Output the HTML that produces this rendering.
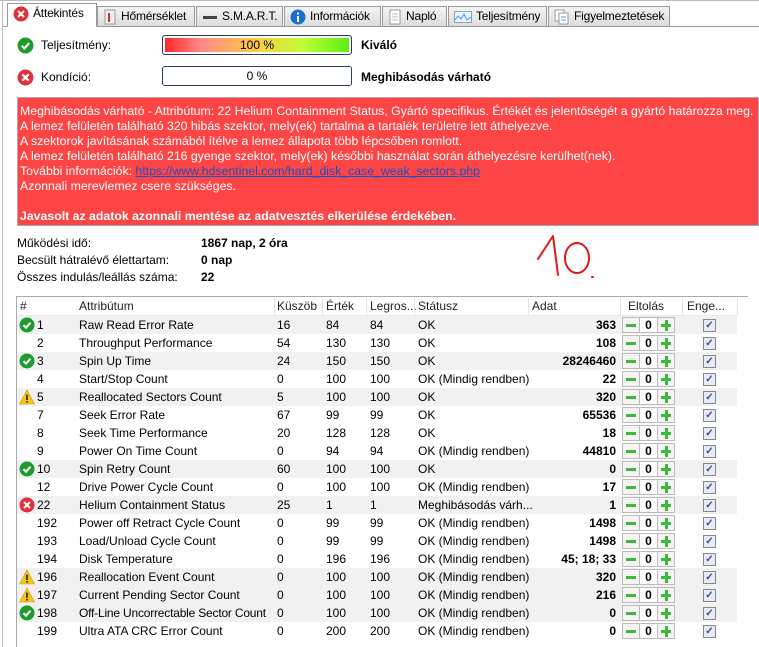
<!DOCTYPE html>
<html><head><meta charset="utf-8"><style>
*{margin:0;padding:0;box-sizing:border-box}
body{width:759px;height:647px;background:#fff;font-family:"Liberation Sans",Arial,sans-serif;font-size:12px;color:#000;position:relative;overflow:hidden}
.a{position:absolute;white-space:nowrap}
.tab{position:absolute;top:6px;height:20px;background:linear-gradient(#f4f4f4,#dcdcdc);border:1px solid #999;border-bottom:none;padding:2px 0 0 5px;font-size:12px;white-space:nowrap;overflow:hidden;letter-spacing:-0.2px}
.tab.act{top:3px;height:24px;background:#fff;border-color:#999}
.ic{display:inline-block;vertical-align:middle;margin-right:4px}
.bar{position:absolute;left:162px;width:190px;height:20px;border:1px solid #2a3a5a;border-radius:3px;text-align:center;line-height:18px}
.red{position:absolute;left:17px;top:97px;width:742px;height:129px;background:#fe4545;border:1px solid #aaa;color:#fff;font-size:12.3px;line-height:15px;padding:6px 0 0 2px}
.red div{white-space:nowrap}
.tbl{position:absolute;left:16px;top:296px;width:732px;height:351px;border-left:1px solid #aaa;border-top:1px solid #aaa}
.row{position:absolute;left:0;width:720px;height:18px;line-height:18px}
.sh{background:#f1f1f1}
.row span{position:absolute;top:0}
.c0{left:20px}.c1{left:62px}.c2{left:260px}.c3{left:309px}.c4{left:353px}.c5{left:401px}
.c6{right:121px;font-weight:bold;text-align:right}
.btn{position:absolute;top:1px;width:18px;height:16px;border:1px solid #bbb;background:#f4f4f4}
.mn{left:605px}.mn:after{content:"";position:absolute;left:3px;top:6px;width:10px;height:3px;background:#3cb83c}
.zb{left:622px;width:19px;background:#fff;text-align:center;font-weight:bold;line-height:14px}
.pl{left:640px}.pl:before{content:"";position:absolute;left:3px;top:6px;width:10px;height:3px;background:#3cb83c}.pl:after{content:"";position:absolute;left:7px;top:2px;width:3px;height:11px;background:#3cb83c}
.cb{position:absolute;left:686px;top:3px;width:13px;height:13px;border:1px solid #888;background:#e8eaf4;color:#334a9a;font-size:10px;line-height:11px;text-align:center;font-weight:bold}
.hd{position:absolute;top:1px;height:17px;line-height:17px;color:#222}
.sep{position:absolute;top:1px;width:1px;height:17px;background:#e4e4e4}
</style></head><body>
<div class="a" style="left:0;top:0;width:759px;height:1px;background:#bbb"></div>
<div class="a" style="left:2px;top:0;width:1px;height:647px;background:#bbb"></div>
<div class="a" style="left:3px;top:26px;width:756px;height:1px;background:#999"></div>

<div class="tab act" style="left:7px;width:90px;border-bottom:1px solid #fff"><svg class="ic" width="16" height="16" viewBox="0 0 16 16"><circle cx="8" cy="8" r="7.5" fill="#e0303a"/><path d="M5 5l6 6M11 5l-6 6" stroke="#fff" stroke-width="2"/></svg>Áttekintés</div>
<div class="tab" style="left:97px;width:98px"><svg class="ic" width="14" height="16" viewBox="0 0 14 16"><rect x="2" y="1" width="10" height="14" fill="#eee" stroke="#999"/><rect x="5" y="4" width="2" height="9" fill="#c33"/></svg>Hőmérséklet</div>
<div class="tab" style="left:196px;width:87px"><svg class="ic" width="16" height="16"><rect x="1" y="7" width="14" height="3" fill="#444"/></svg>S.M.A.R.T.</div>
<div class="tab" style="left:284px;width:97px"><svg class="ic" width="16" height="16" viewBox="0 0 16 16"><circle cx="8" cy="8" r="7.5" fill="#1a70d0"/><rect x="7" y="7" width="2" height="6" fill="#fff"/><rect x="7" y="3.5" width="2" height="2" fill="#fff"/></svg>Információk</div>
<div class="tab" style="left:382px;width:65px"><svg class="ic" width="14" height="16"><rect x="2" y="1" width="10" height="14" fill="#fff" stroke="#999"/><path d="M4 5h6M4 8h6M4 11h6" stroke="#bbb"/></svg>Napló</div>
<div class="tab" style="left:448px;width:99px"><svg class="ic" width="18" height="14"><rect x="0.5" y="1.5" width="17" height="11" fill="#eef4ff" stroke="#8aa"/><path d="M1 10l3-4 3 3 3-5 3 6 4-3" stroke="#39f" fill="none"/></svg>Teljesítmény</div>
<div class="tab" style="left:548px;width:122px"><svg class="ic" width="16" height="16"><rect x="1" y="1" width="9" height="11" fill="#fff" stroke="#999"/><rect x="5" y="4" width="9" height="11" fill="#fff" stroke="#999"/><path d="M7 8h5M7 11h5" stroke="#69c"/></svg>Figyelmeztetések</div>

<svg class="a" style="left:17px;top:37px" width="17" height="17" viewBox="0 0 16 16"><circle cx="8" cy="8" r="7.5" fill="#1e9a2e"/><path d="M4.5 8.2l2.5 2.5 4.5-5" stroke="#fff" stroke-width="2" fill="none"/></svg>
<div class="a" style="left:41px;top:38px">Teljesítmény:</div>
<div class="bar" style="top:35px;background:linear-gradient(90deg,#f22 0%,#f88 20%,#fc4 50%,#bf3 75%,#5e1 100%);box-shadow:inset 0 0 0 2px #fff">100 %</div>
<div class="a" style="left:361px;top:38px;font-weight:bold">Kiváló</div>
<svg class="a" style="left:17px;top:69px" width="17" height="17" viewBox="0 0 16 16"><circle cx="8" cy="8" r="7.5" fill="#e0303a"/><path d="M5 5l6 6M11 5l-6 6" stroke="#fff" stroke-width="2"/></svg>
<div class="a" style="left:41px;top:70px">Kondíció:</div>
<div class="bar" style="top:66px;background:#fff">0 %</div>
<div class="a" style="left:361px;top:70px;font-weight:bold">Meghibásodás várható</div>

<div class="red">
<div>Meghibásodás várható - Attribútum: 22 Helium Containment Status, Gyártó specifikus. Értékét és jelentőségét a gyártó határozza meg.</div>
<div>A lemez felületén található 320 hibás szektor, mely(ek) tartalma a tartalék területre lett áthelyezve.</div>
<div>A szektorok javításának számából ítélve a lemez állapota több lépcsőben romlott.</div>
<div>A lemez felületén található 216 gyenge szektor, mely(ek) későbbi használat során áthelyezésre kerülhet(nek).</div>
<div>További információk: <span style="color:#1a50c8;text-decoration:underline">https://www.hdsentinel.com/hard_disk_case_weak_sectors.php</span></div>
<div>Azonnali merevlemez csere szükséges.</div>
<div>&nbsp;</div>
<div style="font-weight:bold">Javasolt az adatok azonnali mentése az adatvesztés elkerülése érdekében.</div>
</div>

<div class="a" style="left:17px;top:236px">Működési idő:</div><div class="a" style="left:201px;top:236px;font-weight:bold">1867 nap, 2 óra</div>
<div class="a" style="left:17px;top:253px">Becsült hátralévő élettartam:</div><div class="a" style="left:201px;top:253px;font-weight:bold">0 nap</div>
<div class="a" style="left:17px;top:270px">Összes indulás/leállás száma:</div><div class="a" style="left:201px;top:270px;font-weight:bold">22</div>
<svg class="a" style="left:530px;top:230px" width="70" height="50"><path d="M8 29 L23 6 L28 45" stroke="#e01818" stroke-width="2" fill="none" stroke-linecap="round" stroke-linejoin="round"/><ellipse cx="47" cy="28" rx="12" ry="15" stroke="#e01818" stroke-width="2" fill="none"/><path d="M62 47 l1 0" stroke="#e01818" stroke-width="2" stroke-linecap="round"/></svg>

<div class="tbl">
<div class="hd" style="left:3px">#</div>
<div class="hd" style="left:62px">Attribútum</div><div class="sep" style="left:257px"></div>
<div class="hd" style="left:260px">Küszöb</div><div class="sep" style="left:305px"></div>
<div class="hd" style="left:309px">Érték</div><div class="sep" style="left:349px"></div>
<div class="hd" style="left:353px">Legros...</div><div class="sep" style="left:397px"></div>
<div class="hd" style="left:401px">Státusz</div><div class="sep" style="left:511px"></div>
<div class="hd" style="left:515px">Adat</div><div class="sep" style="left:603px"></div>
<div class="hd" style="left:611px">Eltolás</div><div class="sep" style="left:665px"></div>
<div class="hd" style="left:670px">Enge...</div><div class="sep" style="left:720px"></div>
<div class="a" style="left:0;top:18px;width:720px;height:1px;background:#e8e8e8"></div>
</div>

<div id="rows" class="a" style="left:17px;top:316px;width:720px;height:331px">
<div class="row sh" style="top:0"><svg class="a" style="left:2px;top:1px" width="16" height="16" viewBox="0 0 16 16"><circle cx="8" cy="8" r="7.5" fill="#1e9a2e"/><path d="M4.5 8.2l2.5 2.5 4.5-5" stroke="#fff" stroke-width="2" fill="none"/></svg><span class="c0">1</span><span class="c1">Raw Read Error Rate</span><span class="c2">16</span><span class="c3">84</span><span class="c4">84</span><span class="c5">OK</span><span class="c6">363</span><div class="btn mn"></div><div class="btn zb">0</div><div class="btn pl"></div><div class="cb">✓</div></div>
<div class="row" style="top:18px"><span class="c0">2</span><span class="c1">Throughput Performance</span><span class="c2">54</span><span class="c3">130</span><span class="c4">130</span><span class="c5">OK</span><span class="c6">108</span><div class="btn mn"></div><div class="btn zb">0</div><div class="btn pl"></div><div class="cb">✓</div></div>
<div class="row sh" style="top:36px"><svg class="a" style="left:2px;top:1px" width="16" height="16" viewBox="0 0 16 16"><circle cx="8" cy="8" r="7.5" fill="#1e9a2e"/><path d="M4.5 8.2l2.5 2.5 4.5-5" stroke="#fff" stroke-width="2" fill="none"/></svg><span class="c0">3</span><span class="c1">Spin Up Time</span><span class="c2">24</span><span class="c3">150</span><span class="c4">150</span><span class="c5">OK</span><span class="c6">28246460</span><div class="btn mn"></div><div class="btn zb">0</div><div class="btn pl"></div><div class="cb">✓</div></div>
<div class="row" style="top:54px"><span class="c0">4</span><span class="c1">Start/Stop Count</span><span class="c2">0</span><span class="c3">100</span><span class="c4">100</span><span class="c5">OK (Mindig rendben)</span><span class="c6">22</span><div class="btn mn"></div><div class="btn zb">0</div><div class="btn pl"></div><div class="cb">✓</div></div>
<div class="row sh" style="top:72px"><svg class="a" style="left:2px;top:1px" width="16" height="16" viewBox="0 0 16 16"><path d="M8 1L15.5 15H0.5Z" fill="#f5c518" stroke="#c90" stroke-width=".6"/><rect x="7.2" y="5.5" width="1.6" height="5.5" fill="#222"/><rect x="7.2" y="12" width="1.6" height="1.6" fill="#222"/></svg><span class="c0">5</span><span class="c1">Reallocated Sectors Count</span><span class="c2">5</span><span class="c3">100</span><span class="c4">100</span><span class="c5">OK</span><span class="c6">320</span><div class="btn mn"></div><div class="btn zb">0</div><div class="btn pl"></div><div class="cb">✓</div></div>
<div class="row" style="top:90px"><span class="c0">7</span><span class="c1">Seek Error Rate</span><span class="c2">67</span><span class="c3">99</span><span class="c4">99</span><span class="c5">OK</span><span class="c6">65536</span><div class="btn mn"></div><div class="btn zb">0</div><div class="btn pl"></div><div class="cb">✓</div></div>
<div class="row" style="top:108px"><span class="c0">8</span><span class="c1">Seek Time Performance</span><span class="c2">20</span><span class="c3">128</span><span class="c4">128</span><span class="c5">OK</span><span class="c6">18</span><div class="btn mn"></div><div class="btn zb">0</div><div class="btn pl"></div><div class="cb">✓</div></div>
<div class="row" style="top:126px"><span class="c0">9</span><span class="c1">Power On Time Count</span><span class="c2">0</span><span class="c3">94</span><span class="c4">94</span><span class="c5">OK (Mindig rendben)</span><span class="c6">44810</span><div class="btn mn"></div><div class="btn zb">0</div><div class="btn pl"></div><div class="cb">✓</div></div>
<div class="row sh" style="top:144px"><svg class="a" style="left:2px;top:1px" width="16" height="16" viewBox="0 0 16 16"><circle cx="8" cy="8" r="7.5" fill="#1e9a2e"/><path d="M4.5 8.2l2.5 2.5 4.5-5" stroke="#fff" stroke-width="2" fill="none"/></svg><span class="c0">10</span><span class="c1">Spin Retry Count</span><span class="c2">60</span><span class="c3">100</span><span class="c4">100</span><span class="c5">OK</span><span class="c6">0</span><div class="btn mn"></div><div class="btn zb">0</div><div class="btn pl"></div><div class="cb">✓</div></div>
<div class="row" style="top:162px"><span class="c0">12</span><span class="c1">Drive Power Cycle Count</span><span class="c2">0</span><span class="c3">100</span><span class="c4">100</span><span class="c5">OK (Mindig rendben)</span><span class="c6">17</span><div class="btn mn"></div><div class="btn zb">0</div><div class="btn pl"></div><div class="cb">✓</div></div>
<div class="row sh" style="top:180px"><svg class="a" style="left:2px;top:1px" width="16" height="16" viewBox="0 0 16 16"><circle cx="8" cy="8" r="7.5" fill="#e0303a"/><path d="M5 5l6 6M11 5l-6 6" stroke="#fff" stroke-width="2"/></svg><span class="c0">22</span><span class="c1">Helium Containment Status</span><span class="c2">25</span><span class="c3">1</span><span class="c4">1</span><span class="c5">Meghibásodás várh...</span><span class="c6">1</span><div class="btn mn"></div><div class="btn zb">0</div><div class="btn pl"></div><div class="cb">✓</div></div>
<div class="row" style="top:198px"><span class="c0">192</span><span class="c1">Power off Retract Cycle Count</span><span class="c2">0</span><span class="c3">99</span><span class="c4">99</span><span class="c5">OK (Mindig rendben)</span><span class="c6">1498</span><div class="btn mn"></div><div class="btn zb">0</div><div class="btn pl"></div><div class="cb">✓</div></div>
<div class="row" style="top:216px"><span class="c0">193</span><span class="c1">Load/Unload Cycle Count</span><span class="c2">0</span><span class="c3">99</span><span class="c4">99</span><span class="c5">OK (Mindig rendben)</span><span class="c6">1498</span><div class="btn mn"></div><div class="btn zb">0</div><div class="btn pl"></div><div class="cb">✓</div></div>
<div class="row" style="top:234px"><span class="c0">194</span><span class="c1">Disk Temperature</span><span class="c2">0</span><span class="c3">196</span><span class="c4">196</span><span class="c5">OK (Mindig rendben)</span><span class="c6">45; 18; 33</span><div class="btn mn"></div><div class="btn zb">0</div><div class="btn pl"></div><div class="cb">✓</div></div>
<div class="row sh" style="top:252px"><svg class="a" style="left:2px;top:1px" width="16" height="16" viewBox="0 0 16 16"><path d="M8 1L15.5 15H0.5Z" fill="#f5c518" stroke="#c90" stroke-width=".6"/><rect x="7.2" y="5.5" width="1.6" height="5.5" fill="#222"/><rect x="7.2" y="12" width="1.6" height="1.6" fill="#222"/></svg><span class="c0">196</span><span class="c1">Reallocation Event Count</span><span class="c2">0</span><span class="c3">100</span><span class="c4">100</span><span class="c5">OK (Mindig rendben)</span><span class="c6">320</span><div class="btn mn"></div><div class="btn zb">0</div><div class="btn pl"></div><div class="cb">✓</div></div>
<div class="row sh" style="top:270px"><svg class="a" style="left:2px;top:1px" width="16" height="16" viewBox="0 0 16 16"><path d="M8 1L15.5 15H0.5Z" fill="#f5c518" stroke="#c90" stroke-width=".6"/><rect x="7.2" y="5.5" width="1.6" height="5.5" fill="#222"/><rect x="7.2" y="12" width="1.6" height="1.6" fill="#222"/></svg><span class="c0">197</span><span class="c1">Current Pending Sector Count</span><span class="c2">0</span><span class="c3">100</span><span class="c4">100</span><span class="c5">OK (Mindig rendben)</span><span class="c6">216</span><div class="btn mn"></div><div class="btn zb">0</div><div class="btn pl"></div><div class="cb">✓</div></div>
<div class="row sh" style="top:288px"><svg class="a" style="left:2px;top:1px" width="16" height="16" viewBox="0 0 16 16"><circle cx="8" cy="8" r="7.5" fill="#1e9a2e"/><path d="M4.5 8.2l2.5 2.5 4.5-5" stroke="#fff" stroke-width="2" fill="none"/></svg><span class="c0">198</span><span class="c1" style="letter-spacing:-0.2px">Off-Line Uncorrectable Sector Count</span><span class="c2">0</span><span class="c3">100</span><span class="c4">100</span><span class="c5">OK (Mindig rendben)</span><span class="c6">0</span><div class="btn mn"></div><div class="btn zb">0</div><div class="btn pl"></div><div class="cb">✓</div></div>
<div class="row" style="top:306px"><span class="c0">199</span><span class="c1">Ultra ATA CRC Error Count</span><span class="c2">0</span><span class="c3">200</span><span class="c4">200</span><span class="c5">OK (Mindig rendben)</span><span class="c6">0</span><div class="btn mn"></div><div class="btn zb">0</div><div class="btn pl"></div><div class="cb">✓</div></div>
</div>
</body></html>
